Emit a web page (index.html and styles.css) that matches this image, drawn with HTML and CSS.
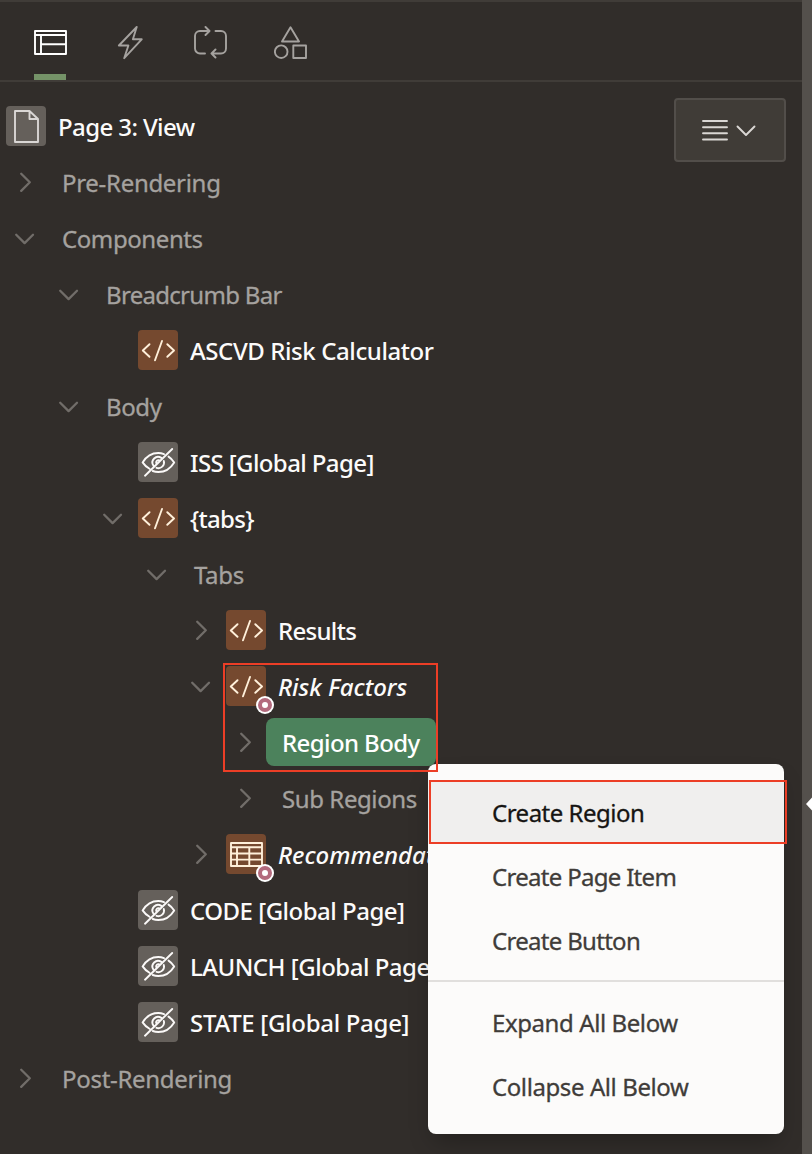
FILE: index.html
```
<!DOCTYPE html>
<html lang="en">
<head>
<meta charset="utf-8">
<title>Page Designer</title>
<link rel="stylesheet" href="styles.css">
</head>
<body>
<svg class="defs" width="0" height="0">
  <symbol id="right" viewBox="0 0 24 24"><path d="M8.2 3.7 L16.8 12.3 L8.2 20.9"/></symbol>
  <symbol id="down" viewBox="0 0 24 24"><path d="M3.2 8.7 L11.6 17.1 L20 8.7"/></symbol>
  <symbol id="code" viewBox="0 0 40 40"><path d="M11.5 14.2 L4.8 20.5 L11.5 26.8 M29.3 14.2 L36 20.5 L29.3 26.8 M24 11 L17 30.3"/></symbol>
  <symbol id="hidden" viewBox="0 0 40 40"><path d="M34.2 7 L7 33.7 M11.5 26.8 C8.5 25 6 22.5 4.6 20.4 C8 15 13.5 11 20.2 11 C22.3 11 24.2 11.4 26 12.1 M30.5 14.6 C32.9 16.2 35 18.5 36.2 20.4 C33 25.7 27.5 30 20.4 30 C18.3 30 16.5 29.7 14.8 29 M23.3 15.9 A5.6 5.6 0 0 0 15.5 23.7 M25.8 19 A5.6 5.6 0 0 1 18.5 25.8 M21 18.2 A2.3 2.3 0 0 0 18.2 21"/></symbol>
  <symbol id="table" viewBox="0 0 40 40"><path d="M5 9 H36 V32 H5 Z M5 13.3 H36 M5 19.5 H36 M5 25.6 H36 M11 13.3 V32 M23.3 13.3 V32"/></symbol>
</svg>
<div class="app">
  <main class="panel">
    <nav class="tabs">
      <div class="tab active"><svg class="ico" viewBox="0 0 34 34"><path d="M1 5 H32 V28 H1 Z M1 9 H32 M7 9 V28 M7 18.3 H32"/></svg></div>
      <div class="tab"><svg class="ico" viewBox="0 0 34 34"><path d="M19.5 1 L1.7 19.5 H11.2 L7 32.2 L24.5 13.3 H15.7 Z" transform="translate(3.2 0)"/></svg></div>
      <div class="tab"><svg class="ico" viewBox="0 0 34 34"><path d="M11 27.5 H6 A5 5 0 0 1 1 22.5 V10 A5 5 0 0 1 6 5 H15 M11.5 1 L15.5 5 L11.5 9 M21.5 5 H27 A5 5 0 0 1 32 10 V22.5 A5 5 0 0 1 27 27.5 H17.5 M21.5 23.5 L17.5 27.5 L21.5 31.5"/></svg></div>
      <div class="tab"><svg class="ico" viewBox="0 0 34 34"><path d="M16.5 1.3 L25 15.5 H8 Z M19.3 19.5 H32 V32 H19.3 Z"/><circle cx="7.2" cy="25.7" r="6.3"/></svg></div>
    </nav>
    <div class="tree">
      <button class="menu-button" type="button">
        <svg width="26" height="24" viewBox="0 0 26 24"><path d="M1 2 H25 M1 8.2 H25 M1 14.3 H25 M1 20.5 H25"/></svg>
        <svg width="20" height="24" viewBox="0 0 20 24"><path d="M1.5 7.5 L10 16 L18.5 7.5"/></svg>
      </button>
      <div class="row root"><span class="icon gray"><svg viewBox="0 0 40 40"><path d="M9 5 H23.5 L32 13 V36 H9 Z M23.5 5 V13 H32"/></svg></span><span class="label strong t6">Page 3: View</span></div>
      <div class="row l0"><svg class="toggle"><use href="#right"/></svg><span class="label t3">Pre-Rendering</span></div>
      <div class="row l0"><svg class="toggle"><use href="#down"/></svg><span class="label t4">Components</span></div>
      <div class="row l1"><svg class="toggle"><use href="#down"/></svg><span class="label t7">Breadcrumb Bar</span></div>
      <div class="row l2 leaf"><span class="icon brown"><svg><use href="#code"/></svg></span><span class="label strong t4">ASCVD Risk Calculator</span></div>
      <div class="row l1"><svg class="toggle"><use href="#down"/></svg><span class="label t4">Body</span></div>
      <div class="row l2 leaf"><span class="icon gray"><svg><use href="#hidden"/></svg></span><span class="label strong t6">ISS [Global Page]</span></div>
      <div class="row l2"><svg class="toggle"><use href="#down"/></svg><span class="icon brown"><svg><use href="#code"/></svg></span><span class="label strong t7">{tabs}</span></div>
      <div class="row l3"><svg class="toggle"><use href="#down"/></svg><span class="label t3">Tabs</span></div>
      <div class="row l4"><svg class="toggle"><use href="#right"/></svg><span class="icon brown"><svg><use href="#code"/></svg></span><span class="label strong t7">Results</span></div>
      <div class="row l4"><svg class="toggle"><use href="#down"/></svg><span class="icon brown"><svg><use href="#code"/></svg><i class="dot"></i></span><span class="label strong italic">Risk Factors</span></div>
      <div class="row l5"><svg class="toggle"><use href="#right"/></svg><span class="label selected t6">Region Body</span></div>
      <div class="row l5"><svg class="toggle"><use href="#right"/></svg><span class="label t4">Sub Regions</span></div>
      <div class="row l4"><svg class="toggle"><use href="#right"/></svg><span class="icon brown"><svg><use href="#table"/></svg><i class="dot"></i></span><span class="label strong italic">Recommendations</span></div>
      <div class="row l2 leaf"><span class="icon gray"><svg><use href="#hidden"/></svg></span><span class="label strong t5">CODE [Global Page]</span></div>
      <div class="row l2 leaf"><span class="icon gray"><svg><use href="#hidden"/></svg></span><span class="label strong t5">LAUNCH [Global Page]</span></div>
      <div class="row l2 leaf"><span class="icon gray"><svg><use href="#hidden"/></svg></span><span class="label strong t3">STATE [Global Page]</span></div>
      <div class="row l0"><svg class="toggle"><use href="#right"/></svg><span class="label t3">Post-Rendering</span></div>
    </div>
  </main>
  <div class="splitter"><svg width="6" height="14" viewBox="0 0 6 14"><path d="M6 0.5 L0 7 L6 13.5 Z"/></svg></div>
  <div class="menu">
    <div class="item hover t5">Create Region</div>
    <div class="item t7">Create Page Item</div>
    <div class="item t7">Create Button</div>
    <hr>
    <div class="item t4">Expand All Below</div>
    <div class="item t4">Collapse All Below</div>
  </div>
  <div class="mark mark-node"></div>
  <div class="mark mark-item"></div>
</div>
</body>
</html>
```
FILE: styles.css
```
* { box-sizing: border-box; }
body { margin: 0; background: #312d2a; }
.defs { position: absolute; }
svg { fill: none; stroke: currentColor; stroke-width: 1.9; stroke-linecap: round; stroke-linejoin: round; }
.app {
  position: relative;
  display: flex;
  width: 812px;
  height: 1154px;
  overflow: hidden;
  color: #a5a29f;
  font-family: "Noto Sans", "Open Sans", sans-serif;
  font-size: 24px;
  -webkit-text-stroke: .3px currentColor;
}
.panel { flex: 1; border-top: 2px solid #403c38; }
.tabs { display: flex; gap: 48px; height: 80px; padding-left: 34px; border-bottom: 2px solid #403c38; }
.tab { width: 32px; height: 78px; padding-top: 24px; }
.tab.active { color: #fff; border-bottom: 6px solid #759368; }
.ico { display: block; width: 34px; height: 34px; }
.tree { position: relative; padding-top: 16px; }
.row { display: flex; align-items: center; height: 56px; white-space: nowrap; }
.root { padding-left: 2px; }
.l1 { padding-left: 44px; }
.l2 { padding-left: 88px; }
.l3 { padding-left: 132px; }
.l4 { padding-left: 176px; }
.l5 { padding-left: 220px; }
.leaf { padding-left: 134px; }
.toggle { width: 24px; height: 24px; margin: 0 9px 0 13px; color: #716d69; stroke-width: 2.3; }
.icon { position: relative; width: 40px; height: 40px; margin: 0 -4px 0 4px; border-radius: 4px; }
.icon svg { display: block; width: 40px; height: 40px; }
.gray { background: #65605b; color: #fbf9f8; }
.brown { background: #75492f; color: #fff0da; }
.root .icon { color: #dad7d5; }
.label { height: 48px; padding: 0 16px; line-height: 50px; }
.strong { color: #fcfbfa; font-weight: 500; -webkit-text-stroke: 0; }
.italic { font-style: italic; }
.selected { width: 170px; border-radius: 8px; background: #4c825c; color: #fff; font-weight: 500; -webkit-text-stroke: 0; }
.t3 { letter-spacing: -.3px; }
.t4 { letter-spacing: -.41px; }
.t5 { letter-spacing: -.5px; }
.t6 { letter-spacing: -.6px; }
.t7 { letter-spacing: -.7px; }
.dot { position: absolute; left: 32px; top: 32px; width: 14px; height: 14px; border: 4px solid #b36a7d; border-radius: 50%; background: #fff; box-shadow: 0 0 0 2px #fff; }
.menu-button {
  position: absolute;
  top: 16px;
  right: 16px;
  display: flex;
  align-items: center;
  justify-content: center;
  gap: 8px;
  width: 112px;
  height: 64px;
  padding: 2px 2px 0 0;
  border: 2px solid #524e4a;
  border-radius: 4px;
  background: #403c37;
  color: #dad7d4;
}
.splitter { display: flex; align-items: center; justify-content: flex-end; width: 10px; padding-top: 454px; background: #54504c; }
.splitter svg { fill: #fff; stroke: none; }
.menu {
  position: absolute;
  left: 428px;
  top: 764px;
  width: 356px;
  height: 370px;
  padding: 16px 0;
  border-radius: 8px;
  background: #fcfbfa;
  color: #403c39;
  box-shadow: 0 12px 24px -6px rgba(0, 0, 0, .3);
}
.item { height: 64px; padding-left: 64px; line-height: 66px; }
.hover { background: #f0efee; color: #161513; }
.menu hr { height: 2px; margin: 8px 0; border: 0; background: #e1dfdd; }
.mark { position: absolute; border: 2px solid #ec3e26; }
.mark-node { left: 223px; top: 663px; width: 215px; height: 109px; }
.mark-item { left: 429px; top: 780px; width: 358px; height: 64px; }
```
